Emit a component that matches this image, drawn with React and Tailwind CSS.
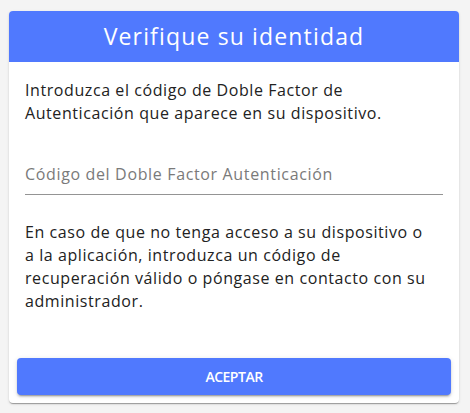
import React, { useState } from "react";

function App() {
  const [code, setCode] = useState("");

  return (
    <div className="min-h-screen bg-[#f4f4f4] px-[9px] pt-[11px] font-['Open_Sans',sans-serif]">
      <div className="w-[450px] bg-white rounded-[4px] shadow-[0_2px_1px_-1px_rgba(0,0,0,0.2),0_1px_1px_0_rgba(0,0,0,0.14),0_1px_3px_0_rgba(0,0,0,0.12)] overflow-hidden">
        <div className="h-[51px] bg-[#5079fe] flex items-center justify-center">
          <h1 className="text-white text-[23px] tracking-[1.15px] leading-none">Verifique su identidad</h1>
        </div>

        <div className="px-4 pt-[17px]">
          <p className="text-[16px] leading-[23.3px] tracking-[0.58px] text-[#222]">
            Introduzca el código de Doble Factor de Autenticación que aparece en su dispositivo.
          </p>

          <input
            className="block w-full mt-[28px] py-2 text-[16px] tracking-[0.65px] border-b border-[#949494] outline-none placeholder:text-[#7a7a7a] text-[#222]"
            placeholder="Código del Doble Factor Autenticación"
            value={code}
            onChange={(e) => setCode(e.target.value)}
          />

          <p className="mt-[26px] text-[16px] leading-[23.3px] tracking-[0.58px] text-[#222]">
            En caso de que no tenga acceso a su dispositivo o
            <br />
            a la aplicación, introduzca un código de
            <br />
            recuperación válido o póngase en contacto con su
            <br />
            administrador.
          </p>
        </div>

        <div className="px-2 pt-[44px] pb-2">
          <button className="w-full h-[37px] bg-[#5079fe] text-white text-[14px] tracking-[-0.5px] font-semibold rounded-[4px] shadow-[0_3px_1px_-2px_rgba(0,0,0,0.2),0_2px_2px_0_rgba(0,0,0,0.14),0_1px_5px_0_rgba(0,0,0,0.12)]">
            ACEPTAR
          </button>
        </div>
      </div>
    </div>
  );
}

export default App;
